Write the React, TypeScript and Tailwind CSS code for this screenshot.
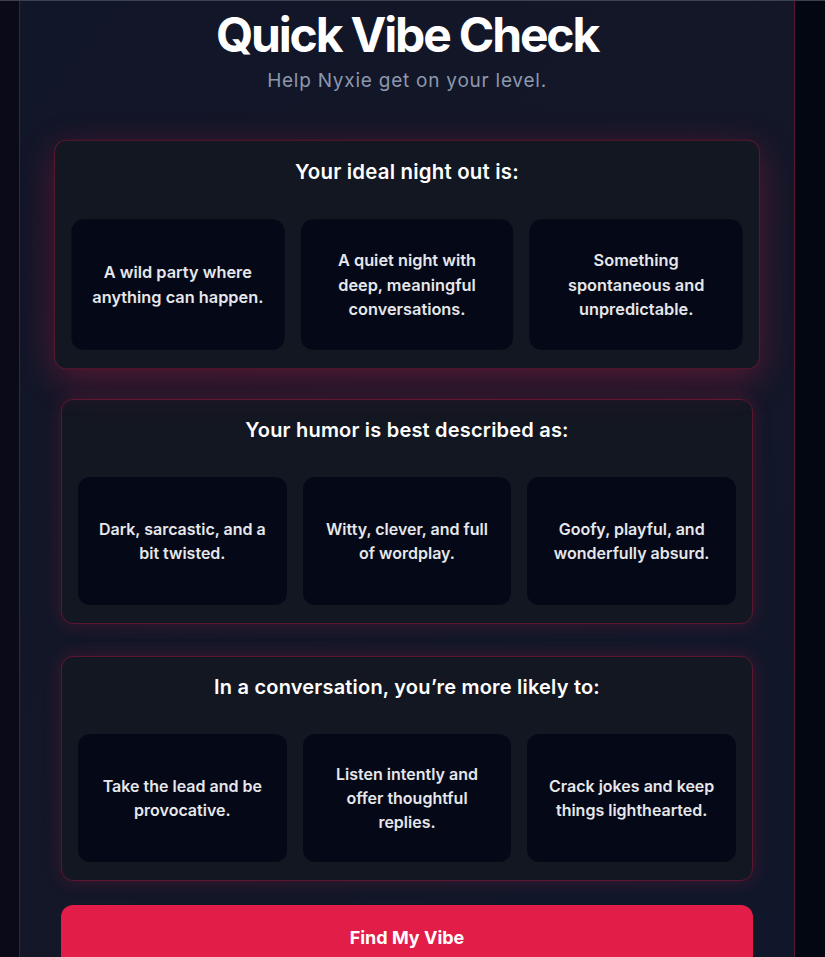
import React from "react";

const questions = [
  {
    title: "Your ideal night out is:",
    options: [
      "A wild party where anything can happen.",
      "A quiet night with deep, meaningful conversations.",
      "Something spontaneous and unpredictable.",
    ],
    active: true,
  },
  {
    title: "Your humor is best described as:",
    options: [
      "Dark, sarcastic, and a bit twisted.",
      "Witty, clever, and full of wordplay.",
      "Goofy, playful, and wonderfully absurd.",
    ],
    active: false,
  },
  {
    title: "In a conversation, you’re more likely to:",
    options: [
      "Take the lead and be provocative.",
      "Listen intently and offer thoughtful replies.",
      "Crack jokes and keep things lighthearted.",
    ],
    active: false,
  },
];

const App = () => {
  return (
    <div className="min-h-screen w-full bg-gradient-to-r from-[#0b0a18] via-[#070a16] to-[#030712] overflow-hidden font-['Inter','Open_Sans',sans-serif]">
      <div className="h-px w-full bg-[#3b4150]" />
      <div className="ml-[19px] w-[776px] min-h-[956px] border-x border-[#5a1630] bg-gradient-to-br from-[#111628] via-[#131728] to-[#10172a] px-[41px] pt-[10px]">
        <h1 className="text-center text-[48px] leading-[48px] font-bold tracking-[-0.045em] text-white">
          Quick Vibe Check
        </h1>
        <p className="mt-2 text-center text-[19px] leading-7 tracking-[0.04em] text-[#8d98ad]">
          Help Nyxie get on your level.
        </p>

        <div className="mt-[47px] flex flex-col gap-8">
          {questions.map((q) => (
            <div
              key={q.title}
              className={
                q.active
                  ? "scale-[1.02] rounded-xl border border-[#5c1730] bg-[#131722] px-4 pt-4 pb-[18px] shadow-[0_10px_35px_rgba(225,29,72,0.32)]"
                  : "rounded-xl border border-[#5c1730] bg-[#131722] px-4 pt-4 pb-[18px] shadow-[0_0_18px_rgba(225,29,72,0.22)]"
              }
            >
              <h3 className="text-center text-xl leading-7 font-semibold tracking-[0.01em] text-white">
                {q.title}
              </h3>
              <div className="mt-[33px] grid grid-cols-3 gap-4">
                {q.options.map((opt) => (
                  <div
                    key={opt}
                    className="flex h-32 items-center justify-center rounded-xl bg-[#050816] px-5 text-center text-base leading-6 font-semibold text-[#e5e7eb]"
                  >
                    {opt}
                  </div>
                ))}
              </div>
            </div>
          ))}
        </div>

        <button className="mt-6 w-full rounded-xl bg-[#e11d48] pt-[19px] pb-4 text-lg font-bold text-white">
          Find My Vibe
        </button>
      </div>
    </div>
  );
};

export default App;
